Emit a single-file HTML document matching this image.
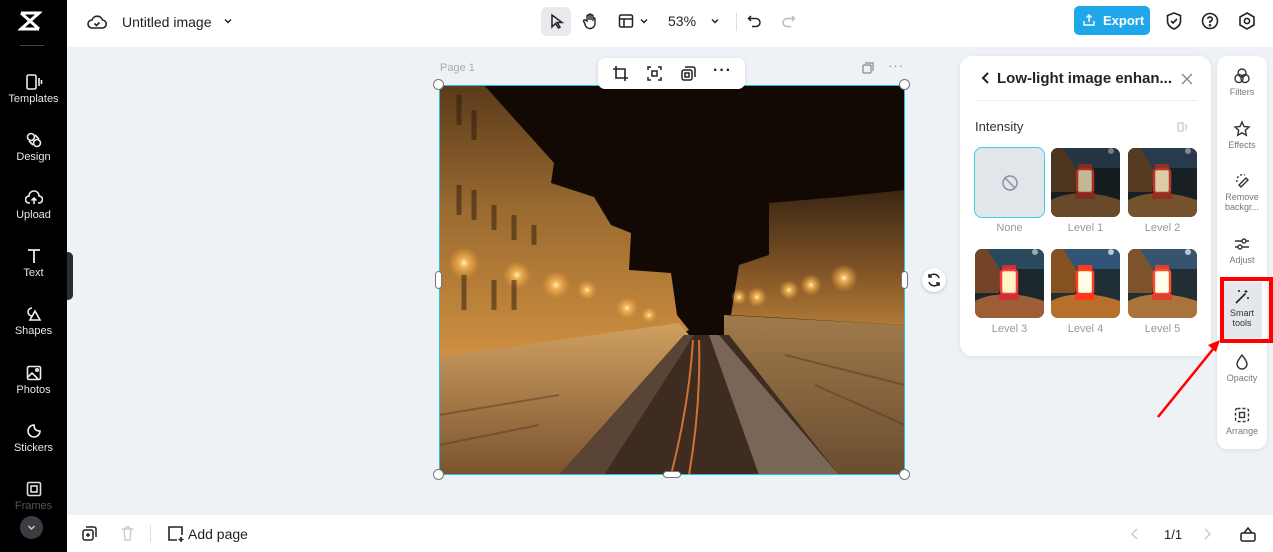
<!DOCTYPE html>
<html><head><meta charset="utf-8"><style>
*{margin:0;padding:0;box-sizing:border-box}
body{width:1273px;height:552px;overflow:hidden;background:#eef1f5;font-family:"Liberation Sans",sans-serif;position:relative;color:#1f2329}
.side{position:absolute;left:0;top:0;width:67px;height:552px;background:#000}
.si{position:absolute;left:0;width:67px;text-align:center;color:#e6e6e6;font-size:11px}
.si svg{display:block;margin:0 auto 2px}
.top{position:absolute;left:67px;top:0;right:0;height:47px;background:#fff}
.bot{position:absolute;left:67px;top:515px;right:0;height:37px;background:#fff}
.abs{position:absolute}
.rail{position:absolute;left:1217px;top:56px;width:50px;height:393px;background:#fff;border-radius:10px;box-shadow:0 1px 4px rgba(0,0,0,.08)}
.ri{position:absolute;left:0;width:50px;text-align:center;font-size:9px;color:#777}
.ri svg{display:block;margin:0 auto 2px}
.panel{position:absolute;left:960px;top:56px;width:251px;height:300px;background:#fff;border-radius:12px;box-shadow:0 1px 6px rgba(0,0,0,.08)}
.th{position:absolute;width:69px;height:69px;border-radius:7px;overflow:hidden}
.lb{position:absolute;width:69px;text-align:center;font-size:11px;color:#999}
</style></head><body>
<svg width="0" height="0" style="position:absolute"><defs>
 <symbol id="lant" viewBox="0 0 69 69">
  <rect width="69" height="69" fill="#1a2226"/>
  <rect width="69" height="20" fill="#2a3e50"/>
  <path d="M0 0h12l14 22-2 22L0 44z" fill="#5a3e24"/>
  <path d="M0 52c15-8 40-10 69 0v17H0z" fill="#7a5630"/>
  <rect x="27" y="16" width="14" height="5" fill="#9a3224"/>
  <rect x="26" y="21" width="16" height="24" rx="3" fill="#e8d6b0" stroke="#c23a28" stroke-width="2.5"/>
  <rect x="24" y="45" width="20" height="6" fill="#9a3224"/>
  <circle cx="60" cy="3" r="3" fill="#8a929a"/>
 </symbol>
</defs></svg>
<div class="side">
 <svg class="abs" style="left:18px;top:10px" width="24" height="22" viewBox="0 0 24 22"><path d="M3 3h18L3 19h18M3 3l18 16M21 3 3 19" stroke="#fff" stroke-width="3" fill="none"/></svg>
 <div class="abs" style="left:20px;top:45px;width:24px;height:1px;background:#444"></div>
 <div class="si" style="top:73px"><svg width="18" height="18" viewBox="0 0 18 18" fill="none" stroke="#eee" stroke-width="1.6"><rect x="2" y="2" width="9" height="14" rx="1.5"/><path d="M14 5v8M16.5 7v4"/></svg>Templates</div>
 <div class="si" style="top:131px"><svg width="18" height="18" viewBox="0 0 18 18" fill="none" stroke="#eee" stroke-width="1.6"><circle cx="6" cy="6" r="3.5"/><circle cx="12" cy="12" r="3.5"/><path d="M10 4l4 4M4 10l4 4"/></svg>Design</div>
 <div class="si" style="top:189px"><svg width="18" height="18" viewBox="0 0 18 18" fill="none" stroke="#eee" stroke-width="1.6"><path d="M5 14H4a3.5 3.5 0 0 1 0-7 5 5 0 0 1 10 0 3.5 3.5 0 0 1 0 7h-1M9 15V9M6.5 11.5 9 9l2.5 2.5"/></svg>Upload</div>
 <div class="si" style="top:247px"><svg width="18" height="18" viewBox="0 0 18 18" fill="none" stroke="#eee" stroke-width="1.8"><path d="M3 3h12M9 3v13"/></svg>Text</div>
 <div class="si" style="top:305px"><svg width="18" height="18" viewBox="0 0 18 18" fill="none" stroke="#eee" stroke-width="1.6"><path d="M7 3a4 4 0 1 0 0 8M10 6l5 9H5z"/></svg>Shapes</div>
 <div class="si" style="top:364px"><svg width="18" height="18" viewBox="0 0 18 18" fill="none" stroke="#eee" stroke-width="1.6"><rect x="2.5" y="2.5" width="13" height="13" rx="1.5"/><path d="M3 13l4-4 6 6"/><circle cx="12" cy="6" r="1.2"/></svg>Photos</div>
 <div class="si" style="top:422px"><svg width="18" height="18" viewBox="0 0 18 18" fill="none" stroke="#eee" stroke-width="1.6"><path d="M15 9a6 6 0 1 1-6-6c0 4 2 6 6 6z"/></svg>Stickers</div>
 <div class="si" style="top:480px;color:#555"><svg width="18" height="18" viewBox="0 0 18 18" fill="none" stroke="#ddd" stroke-width="1.6"><rect x="2.5" y="2.5" width="13" height="13" rx="1.5"/><rect x="6" y="6" width="6" height="6"/></svg>Frames</div>
 <div class="abs" style="left:20px;top:516px;width:23px;height:23px;border-radius:50%;background:#3a3d42"><svg width="23" height="23" viewBox="0 0 23 23"><path d="M8.5 10l3 3 3-3" stroke="#ccc" stroke-width="1.4" fill="none"/></svg></div>
</div>
<div class="abs" style="left:67px;top:252px;width:6px;height:48px;background:#2a2c30;border-radius:0 5px 5px 0"></div>
<div class="top">
 <svg class="abs" style="left:20px;top:12px" width="20" height="20" viewBox="0 0 20 20" fill="none" stroke="#222" stroke-width="1.6"><path d="M6 16H5a4 4 0 0 1 0-8 5.5 5.5 0 0 1 10.5 0A4 4 0 0 1 15 16z"/><path d="M7.5 11.5l2 2 3-3"/></svg>
 <div class="abs" style="left:55px;top:14px;font-size:14px;color:#222">Untitled image</div>
 <svg class="abs" style="left:155px;top:15px" width="12" height="12" viewBox="0 0 12 12"><path d="M3 4.5l3 3 3-3" stroke="#222" stroke-width="1.5" fill="none"/></svg>
 <div class="abs" style="left:474px;top:7px;width:30px;height:29px;background:#e8eaee;border-radius:6px"></div>
 <svg class="abs" style="left:480px;top:12px" width="18" height="18" viewBox="0 0 18 18"><path d="M5 3v12l3.5-3.5 3 4.5 1.5-1-3-4.5H15z" fill="none" stroke="#222" stroke-width="1.5"/></svg>
 <svg class="abs" style="left:514px;top:12px" width="18" height="18" viewBox="0 0 18 18" fill="none" stroke="#222" stroke-width="1.4"><path d="M6 9V4a1 1 0 0 1 2 0v4V3a1 1 0 0 1 2 0v5V4a1 1 0 0 1 2 0v5-2a1 1 0 0 1 2 0v4a5 5 0 0 1-10 1l-1.5-3a1 1 0 0 1 1.5-1z"/></svg>
 <svg class="abs" style="left:550px;top:12px" width="18" height="18" viewBox="0 0 18 18" fill="none" stroke="#222" stroke-width="1.5"><rect x="2.5" y="3" width="13" height="12" rx="1.5"/><path d="M2.5 7h13M7 7v8"/></svg>
 <svg class="abs" style="left:571px;top:15px" width="12" height="12" viewBox="0 0 12 12"><path d="M3 4.5l3 3 3-3" stroke="#222" stroke-width="1.5" fill="none"/></svg>
 <div class="abs" style="left:601px;top:13px;font-size:14px">53%</div>
 <svg class="abs" style="left:642px;top:15px" width="12" height="12" viewBox="0 0 12 12"><path d="M3 4.5l3 3 3-3" stroke="#222" stroke-width="1.5" fill="none"/></svg>
 <div class="abs" style="left:669px;top:13px;width:1px;height:18px;background:#ddd"></div>
 <svg class="abs" style="left:679px;top:12px" width="18" height="18" viewBox="0 0 18 18" fill="none" stroke="#222" stroke-width="1.5"><path d="M5 4 2.5 6.5 5 9M3 6.5h7a4 4 0 0 1 0 8H6"/></svg>
 <svg class="abs" style="left:712px;top:12px" width="18" height="18" viewBox="0 0 18 18" fill="none" stroke="#bbb" stroke-width="1.5"><path d="M13 4l2.5 2.5L13 9M15 6.5H8a4 4 0 0 0 0 8h4"/></svg>
 <div class="abs" style="left:1007px;top:6px;width:76px;height:29px;background:#20a7e9;border-radius:5px;color:#fff;font-size:13px;font-weight:bold;padding:7px 0 0 29px">Export</div>
 <svg class="abs" style="left:1015px;top:13px" width="14" height="14" viewBox="0 0 14 14" fill="none" stroke="#fff" stroke-width="1.4"><path d="M7 9V2M4.5 4.5 7 2l2.5 2.5M2 8v4h10V8"/></svg>
 <svg class="abs" style="left:1097px;top:11px" width="20" height="20" viewBox="0 0 20 20" fill="none" stroke="#222" stroke-width="1.6"><path d="M10 2l6.5 2.5V10c0 4-3 6.5-6.5 8-3.5-1.5-6.5-4-6.5-8V4.5z"/><path d="M7 10l2 2 4-4"/></svg>
 <svg class="abs" style="left:1133px;top:11px" width="20" height="20" viewBox="0 0 20 20" fill="none" stroke="#222" stroke-width="1.6"><circle cx="10" cy="10" r="7.5"/><path d="M7.8 8a2.2 2.2 0 1 1 2.2 2.3V12"/><circle cx="10" cy="14.3" r=".5"/></svg>
 <svg class="abs" style="left:1170px;top:11px" width="20" height="20" viewBox="0 0 20 20" fill="none" stroke="#222" stroke-width="1.6"><path d="M10 2l7 4v8l-7 4-7-4V6z"/><circle cx="10" cy="10" r="2.6"/></svg>
</div>
<div class="abs" style="left:440px;top:62px;font-size:11px;color:#aaa">Page 1</div>
<svg class="abs" style="left:861px;top:61px" width="14" height="14" viewBox="0 0 14 14" fill="none" stroke="#888" stroke-width="1.2"><rect x="2" y="4" width="8" height="8" rx="1"/><path d="M4 2h8v8"/></svg>
<div class="abs" style="left:888px;top:58px;font-size:13px;color:#888;letter-spacing:1px">···</div>
<svg class="abs" style="left:439px;top:85px" width="466" height="390" viewBox="0 0 466 390">
 <defs>
  <linearGradient id="lb" x1="0" y1="0" x2="0" y2="1"><stop offset="0" stop-color="#5a3a1a"/><stop offset=".45" stop-color="#9a6a30"/><stop offset="1" stop-color="#d09040"/></linearGradient>
  <linearGradient id="rb" x1="0" y1="0" x2="0" y2="1"><stop offset="0" stop-color="#3a2614"/><stop offset=".6" stop-color="#805426"/><stop offset="1" stop-color="#b07a36"/></linearGradient>
  <linearGradient id="wl" x1="0" y1="0" x2="0" y2="1"><stop offset="0" stop-color="#d0a060"/><stop offset="1" stop-color="#7a5430"/></linearGradient>
  <linearGradient id="wr" x1="0" y1="0" x2="0" y2="1"><stop offset="0" stop-color="#a07a4a"/><stop offset="1" stop-color="#6a4c30"/></linearGradient>
  <radialGradient id="gl" cx=".5" cy=".5" r=".5"><stop offset="0" stop-color="#fff6d0"/><stop offset=".25" stop-color="#ffc860" stop-opacity=".8"/><stop offset="1" stop-color="#ffa040" stop-opacity="0"/></radialGradient>
 </defs>
 <rect width="466" height="390" fill="#120905"/>
 <polygon points="0,0 45,0 115,78 112,98 155,112 172,140 192,148 190,185 232,188 238,230 250,245 240,250 0,275" fill="url(#lb)"/>
 <polygon points="466,105 400,112 330,118 330,170 300,180 292,230 466,240" fill="url(#rb)"/>
 <polygon points="0,272 240,238 250,250 120,390 0,390" fill="url(#wl)"/>
 <polygon points="285,230 466,240 466,390 395,390 285,250" fill="url(#wr)"/>
 <polygon points="120,390 245,250 262,250 290,250 400,390" fill="#3e2c20"/>
 <polygon points="120,390 245,250 255,250 165,390" fill="#5a4436"/>
 <polygon points="280,250 400,390 320,390 270,250" fill="#7a6656"/>
 <path d="M254 255 Q250 320 232 390 M260 255 Q262 320 250 390" stroke="#ff8a40" stroke-width="2" fill="none" opacity=".75"/>
 <g>
  <circle cx="25" cy="178" r="16" fill="url(#gl)"/><circle cx="78" cy="190" r="14" fill="url(#gl)"/>
  <circle cx="117" cy="200" r="14" fill="url(#gl)"/><circle cx="148" cy="205" r="10" fill="url(#gl)"/>
  <circle cx="188" cy="223" r="11" fill="url(#gl)"/><circle cx="210" cy="230" r="8" fill="url(#gl)"/>
  <circle cx="405" cy="193" r="14" fill="url(#gl)"/><circle cx="372" cy="200" r="11" fill="url(#gl)"/>
  <circle cx="350" cy="205" r="10" fill="url(#gl)"/><circle cx="318" cy="212" r="10" fill="url(#gl)"/>
  <circle cx="300" cy="212" r="8" fill="url(#gl)"/>
 </g>
 <path d="M20 10v30M35 25v30M20 100v30M35 105v30M55 120v25M75 130v25M95 140v20M25 190v35M55 195v30M75 195v30" stroke="#2a1a0c" stroke-width="5" opacity=".5"/>
 <path d="M0 330l120-20M0 360l100-20M466 300l-120-30M466 340l-90-40" stroke="#5a3a20" stroke-width="2" opacity=".5"/>
</svg>
<div class="abs" style="left:439px;top:85px;width:466px;height:390px;border:1.5px solid #22c7d6"></div>
<div class="abs" style="left:598px;top:58px;width:147px;height:31px;background:#fff;border-radius:7px;box-shadow:0 1px 4px rgba(0,0,0,.12)"></div>
<svg class="abs" style="left:612px;top:65px" width="17" height="17" viewBox="0 0 17 17" fill="none" stroke="#222" stroke-width="1.6"><path d="M4 1v12h12M1 4h12v12"/></svg>
<svg class="abs" style="left:646px;top:65px" width="17" height="17" viewBox="0 0 17 17" fill="none" stroke="#222" stroke-width="1.5"><path d="M2 5V2h3M12 2h3v3M15 12v3h-3M5 15H2v-3"/><rect x="6" y="6" width="5" height="5"/></svg>
<svg class="abs" style="left:680px;top:65px" width="17" height="17" viewBox="0 0 17 17" fill="none" stroke="#222" stroke-width="1.5"><rect x="2" y="5" width="10" height="10" rx="2"/><path d="M5 2h8a2 2 0 0 1 2 2v8"/><rect x="5" y="8" width="4" height="4"/></svg>
<div class="abs" style="left:713px;top:62px;font-size:16px;font-weight:bold;letter-spacing:1px">···</div>
<div class="abs" style="left:433px;top:79px;width:11px;height:11px;border-radius:50%;background:#fff;border:1px solid #777"></div>
<div class="abs" style="left:899px;top:79px;width:11px;height:11px;border-radius:50%;background:#fff;border:1px solid #777"></div>
<div class="abs" style="left:433px;top:469px;width:11px;height:11px;border-radius:50%;background:#fff;border:1px solid #777"></div>
<div class="abs" style="left:899px;top:469px;width:11px;height:11px;border-radius:50%;background:#fff;border:1px solid #777"></div>
<div class="abs" style="left:435px;top:271px;width:7px;height:18px;border-radius:4px;background:#fff;border:1px solid #777"></div>
<div class="abs" style="left:901px;top:271px;width:7px;height:18px;border-radius:4px;background:#fff;border:1px solid #777"></div>
<div class="abs" style="left:663px;top:471px;width:18px;height:7px;border-radius:4px;background:#fff;border:1px solid #777"></div>
<div class="abs" style="left:922px;top:268px;width:24px;height:24px;border-radius:50%;background:#fff;box-shadow:0 1px 3px rgba(0,0,0,.2)"><svg width="24" height="24" viewBox="0 0 24 24" fill="none" stroke="#222" stroke-width="1.5"><path d="M17 10a5.5 5.5 0 0 0-10-1M7 14a5.5 5.5 0 0 0 10 1M7 6v3h3M17 18v-3h-3"/></svg></div>
<div class="panel">
 <svg class="abs" style="left:20px;top:15px" width="12" height="14" viewBox="0 0 12 14"><path d="M8 2 3 7l5 5" stroke="#222" stroke-width="2" fill="none"/></svg>
 <div class="abs" style="left:37px;top:14px;font-size:15px;font-weight:bold;color:#1f2329">Low-light image enhan...</div>
 <svg class="abs" style="left:219px;top:15px" width="16" height="16" viewBox="0 0 16 16"><path d="M3 3l10 10M13 3 3 13" stroke="#888" stroke-width="1.4"/></svg>
 <div class="abs" style="left:15px;top:44px;width:222px;height:1px;background:#eee"></div>
 <div class="abs" style="left:15px;top:63px;font-size:13px;color:#333">Intensity</div>
 <svg class="abs" style="left:216px;top:64px" width="14" height="14" viewBox="0 0 14 14" fill="none" stroke="#ccc" stroke-width="1.3"><rect x="2" y="3" width="5" height="8"/><path d="M9 4a4 4 0 0 1 0 6"/></svg>
 <div class="abs" style="left:14px;top:91px;width:71px;height:71px;border-radius:8px;border:1.5px solid #3dd0e6;background:#e2e5ea"><svg class="abs" style="left:26px;top:26px" width="18" height="18" viewBox="0 0 18 18" fill="none" stroke="#8a939e" stroke-width="1.5"><circle cx="9" cy="9" r="7"/><path d="M4 4l10 10"/></svg></div>
 <div class="lb" style="left:15px;top:166px">None</div>
 <svg class="th" style="left:91px;top:92px;filter:brightness(.85)"><use href="#lant"/></svg><div class="lb" style="left:91px;top:166px">Level 1</div>
 <svg class="th" style="left:168px;top:92px;filter:brightness(.95)"><use href="#lant"/></svg><div class="lb" style="left:168px;top:166px">Level 2</div>
 <svg class="th" style="left:15px;top:193px;filter:brightness(1.15) saturate(1.2) hue-rotate(-10deg)"><use href="#lant"/></svg><div class="lb" style="left:15px;top:267px">Level 3</div>
 <svg class="th" style="left:91px;top:193px;filter:brightness(1.35) saturate(1.4)"><use href="#lant"/></svg><div class="lb" style="left:91px;top:267px">Level 4</div>
 <svg class="th" style="left:168px;top:193px;filter:brightness(1.35) saturate(1.1)"><use href="#lant"/></svg><div class="lb" style="left:168px;top:267px">Level 5</div>
</div>
<div class="rail">
 <div class="ri" style="top:11px"><svg width="18" height="18" viewBox="0 0 18 18" fill="none" stroke="#333" stroke-width="1.4"><circle cx="9" cy="6" r="4"/><circle cx="6" cy="11.5" r="4"/><circle cx="12" cy="11.5" r="4"/></svg>Filters</div>
 <div class="ri" style="top:64px"><svg width="18" height="18" viewBox="0 0 18 18" fill="none" stroke="#333" stroke-width="1.4"><path d="M9 2l2 4.5 5 .5-3.7 3.3 1 5L9 12.8 4.7 15.3l1-5L2 7l5-.5z"/></svg>Effects</div>
 <div class="ri" style="top:116px;line-height:10px"><svg width="18" height="18" viewBox="0 0 18 18" fill="none" stroke="#333" stroke-width="1.4"><path d="M4 10a6 6 0 0 1 8-7" stroke-dasharray="2 2"/><path d="M8 15l7-7-2-2-7 7z"/></svg>Remove<br>backgr...</div>
 <div class="ri" style="top:179px"><svg width="18" height="18" viewBox="0 0 18 18" fill="none" stroke="#333" stroke-width="1.4"><path d="M2 6h14M2 12h14"/><circle cx="11" cy="6" r="2" fill="#fff"/><circle cx="7" cy="12" r="2" fill="#fff"/></svg>Adjust</div>
 <div class="ri" style="top:226px;left:5px;width:40px;height:56px;background:#e4e7ec;padding-top:6px;color:#333;line-height:10px"><svg width="18" height="18" viewBox="0 0 18 18" fill="none" stroke="#222" stroke-width="1.6"><path d="M3 15l8-8M11 7l1.5-1.5"/><path d="M13 2v3M11.5 3.5h3M15 9v2M14 10h2M6 2v2M5 3h2" stroke-width="1.1"/></svg>Smart<br>tools</div>
 <div class="ri" style="top:297px"><svg width="18" height="18" viewBox="0 0 18 18" fill="none" stroke="#333" stroke-width="1.4"><path d="M9 2c3 4 5 6.5 5 9a5 5 0 0 1-10 0c0-2.5 2-5 5-9z"/></svg>Opacity</div>
 <div class="ri" style="top:350px"><svg width="18" height="18" viewBox="0 0 18 18" fill="none" stroke="#333" stroke-width="1.4"><rect x="2.5" y="2.5" width="13" height="13" rx="2" stroke-dasharray="3 2"/><rect x="6.5" y="6.5" width="5" height="5"/></svg>Arrange</div>
</div>
<div class="abs" style="left:1220px;top:277px;width:53px;height:66px;border:4px solid #f00"></div>
<svg class="abs" style="left:1150px;top:335px" width="75" height="85" viewBox="0 0 75 85"><path d="M8 82 L68 8" stroke="#f00" stroke-width="2.5"/><path d="M70 5 L58 10 L66 17z" fill="#f00"/></svg>
<div class="bot">
 <svg class="abs" style="left:14px;top:10px" width="17" height="17" viewBox="0 0 17 17" fill="none" stroke="#222" stroke-width="1.5"><rect x="2" y="5" width="10" height="10" rx="2"/><path d="M5 2h8a2 2 0 0 1 2 2v8M7 8v4M5 10h4"/></svg>
 <svg class="abs" style="left:52px;top:10px" width="17" height="17" viewBox="0 0 17 17" fill="none" stroke="#ccc" stroke-width="1.4"><path d="M3 4h11M5 4l1 11h5l1-11M7 4V2h3v2"/></svg>
 <div class="abs" style="left:83px;top:10px;width:1px;height:17px;background:#ddd"></div>
 <svg class="abs" style="left:99px;top:9px" width="19" height="19" viewBox="0 0 19 19" fill="none" stroke="#222" stroke-width="1.6"><path d="M11 16H3V3h13v8M15 13v5M12.5 15.5h5"/></svg>
 <div class="abs" style="left:121px;top:11px;font-size:14px;color:#222">Add page</div>
 <svg class="abs" style="left:1062px;top:12px" width="12" height="14" viewBox="0 0 12 14"><path d="M8 2 3 7l5 5" stroke="#ccc" stroke-width="1.5" fill="none"/></svg>
 <div class="abs" style="left:1097px;top:12px;font-size:13px;color:#222">1/1</div>
 <svg class="abs" style="left:1134px;top:12px" width="12" height="14" viewBox="0 0 12 14"><path d="M4 2l5 5-5 5" stroke="#ccc" stroke-width="1.5" fill="none"/></svg>
 <svg class="abs" style="left:1172px;top:10px" width="18" height="18" viewBox="0 0 18 18" fill="none" stroke="#222" stroke-width="1.5"><rect x="2" y="8" width="14" height="8" rx="1.5"/><path d="M5 8l4-5 4 5"/></svg>
</div>
</body></html>
